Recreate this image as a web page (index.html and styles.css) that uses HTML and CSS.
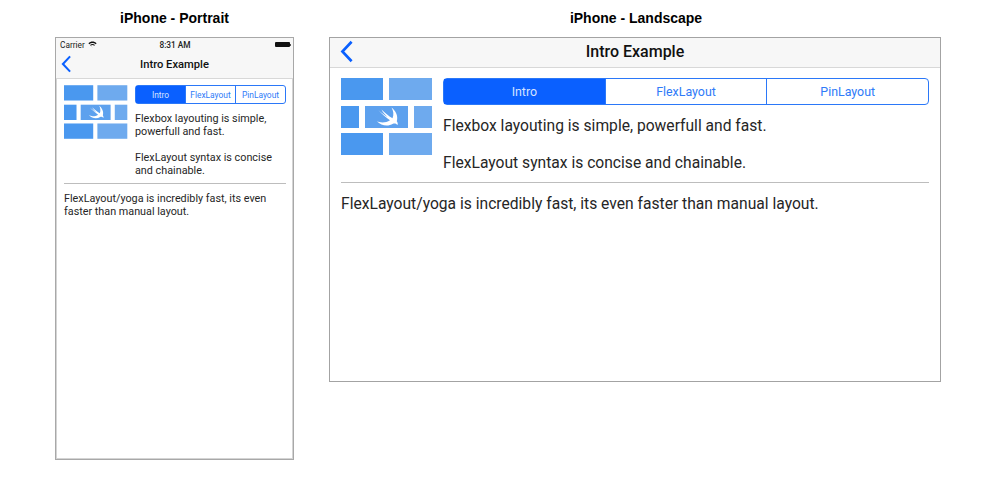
FILE: index.html
```html
<!DOCTYPE html>
<html lang="en">
<head>
<meta charset="utf-8">
<title>iPhone layouts</title>
<link rel="stylesheet" href="styles.css">
</head>
<body>
<svg class="defs" width="0" height="0" aria-hidden="true">
  <symbol id="logo" viewBox="0 0 92 77">
    <rect x="0" y="0" width="42" height="22" fill="#4a98ef"/>
    <rect x="48" y="0" width="43" height="22" fill="#6eaaee"/>
    <rect x="0" y="28" width="18" height="22" fill="#4a98ef"/>
    <rect x="24" y="28" width="43" height="22" fill="#5da1ee"/>
    <rect x="73" y="28" width="18" height="22" fill="#6eaaee"/>
    <rect x="0" y="55" width="42" height="22" fill="#4a98ef"/>
    <rect x="48" y="55" width="43" height="22" fill="#6eaaee"/>
    <path d="M50.500 29.500C54.500 32.500 57.500 38 55.800 43.200C56.800 44.500 57 46 56.500 47C55.500 45.500 53.500 45 52 45.800C47 48.800 40.500 48 35.700 43.300C39.500 45 45 45 49 42.300C45 39.500 40.500 35.800 37.300 32C40.500 35 44 37.500 46.500 39C44 36.800 42 34.500 40.500 31.500C44 35 47.500 38 51.500 40.300C53 36.500 52.500 33 50.500 29.500Z" fill="#fff"/>
  </symbol>
</svg>
<main class="stage">
  <section class="device device-portrait">
    <h2 class="device-title">iPhone - Portrait</h2>
    <div class="screen">
      <header class="bar">
        <div class="status">
          <span class="status-left">Carrier
            <svg class="wifi" viewBox="0 0 10 8"><path d="M5 7.500 0.300 2.600C3 0 7 0 9.700 2.600L8.700 3.600C6.500 1.700 3.500 1.700 1.300 3.600L2.200 4.500C3.800 3.200 6.200 3.200 7.800 4.500L7 5.300C5.800 4.500 4.200 4.500 3 5.300Z" fill="#111"/></svg>
          </span>
          <span class="status-time">8:31 AM</span>
          <span class="battery"></span>
        </div>
        <div class="nav">
          <svg class="back" viewBox="0 0 12 20"><path d="M10 1.500 2 10l8 8.500" fill="none" stroke="#0a60ff" stroke-width="2.300"/></svg>
          <span class="nav-title">Intro Example</span>
        </div>
      </header>
      <div class="content">
        <div class="intro">
          <svg class="logo"><use href="#logo"/></svg>
          <div class="intro-main">
            <div class="segments">
              <span class="segment segment-on">Intro</span>
              <span class="segment">FlexLayout</span>
              <span class="segment">PinLayout</span>
            </div>
            <p class="copy copy-first">Flexbox layouting is simple, powerfull and fast.</p>
            <p class="copy copy-second">FlexLayout syntax is concise and chainable.</p>
          </div>
        </div>
        <hr class="rule">
        <p class="copy copy-last">FlexLayout/yoga is incredibly fast, its even faster than manual layout.</p>
      </div>
    </div>
  </section>
  <section class="device device-landscape">
    <h2 class="device-title">iPhone - Landscape</h2>
    <div class="screen">
      <header class="bar">
        <div class="nav">
          <svg class="back" viewBox="0 0 12 20"><path d="M10 1.500 2 10l8 8.500" fill="none" stroke="#0a60ff" stroke-width="2.300"/></svg>
          <span class="nav-title">Intro Example</span>
        </div>
      </header>
      <div class="content">
        <div class="intro">
          <svg class="logo"><use href="#logo"/></svg>
          <div class="intro-main">
            <div class="segments">
              <span class="segment segment-on">Intro</span>
              <span class="segment">FlexLayout</span>
              <span class="segment">PinLayout</span>
            </div>
            <p class="copy copy-first">Flexbox layouting is simple, powerfull and fast.</p>
            <p class="copy copy-second">FlexLayout syntax is concise and chainable.</p>
          </div>
        </div>
        <hr class="rule">
        <p class="copy copy-last">FlexLayout/yoga is incredibly fast, its even faster than manual layout.</p>
      </div>
    </div>
  </section>
</main>
</body>
</html>
```
FILE: styles.css
```css
* { box-sizing: border-box; }
html, body { margin: 0; background: #fff; }
body { width: 984px; height: 480px; overflow: hidden; font-family: Roboto, "Liberation Sans", sans-serif; color: #1c1c1c; }
.defs { position: absolute; }
.stage { display: flex; align-items: flex-start; gap: 35px; padding: 11px 0 0 55px; }
.device { display: flex; flex-direction: column; }
.device-portrait { width: 239px; }
.device-landscape { width: 612px; }
.device-title { margin: 0 0 11px; height: 15px; line-height: 15px; font-size: 14px; font-weight: 700; text-align: center; color: #000; font-family: "Liberation Sans", sans-serif; }
.device-landscape .device-title { padding-left: 2px; }
.screen { border: 1px solid #a3a3a3; background: #fff; display: flex; flex-direction: column; }
.device-portrait .screen { height: 423px; border-color: #a8a8a8; box-shadow: inset 1px 0 #d4d4d4, inset -1px 0 #d4d4d4, inset 0 -1px #d4d4d4; }
.device-landscape .screen { height: 345px; }
.bar { background: #f7f7f7; border-bottom: 1px solid #d8d8d8; }
.status { height: 13px; display: flex; align-items: center; justify-content: space-between; position: relative; padding: 0 3px 0 4px; font-size: 8.300px; color: #222; }
.status-left { display: flex; align-items: center; gap: 3px; }
.wifi { width: 9px; height: 7px; }
.status-time { position: absolute; left: 1px; right: 0; text-align: center; font-size: 8.300px; font-weight: 500; }
.battery { width: 15px; height: 5px; border-radius: 1px; background: #111; position: relative; }
.battery::after { content: ""; position: absolute; right: -1px; top: 1.500px; width: 1px; height: 2px; background: #555; }
.nav { position: relative; display: flex; align-items: center; justify-content: center; }
.device-portrait .nav { height: 27px; }
.device-landscape .nav { height: 29px; padding-bottom: 2px; }
.back { position: absolute; }
.device-portrait .back { left: 5px; top: 4px; width: 11px; height: 18px; }
.device-landscape .back { left: 10px; top: 2px; width: 14px; height: 23px; }
.nav-title { font-weight: 500; color: #111; }
.device-portrait .nav-title { font-size: 11.200px; }
.device-landscape .nav-title { font-size: 16px; }
.content { display: flex; flex-direction: column; }
.device-portrait .content { padding: 6px 7px 0 8px; }
.device-landscape .content { padding: 10px 11px 0 11px; }
.intro { display: flex; }
.logo { flex: none; }
.device-portrait .logo { width: 64px; height: 54px; margin-right: 7px; }
.device-landscape .logo { width: 92px; height: 77px; margin-right: 10px; }
.intro-main { flex: 1; min-width: 0; }
.segments { display: flex; border: 1px solid #2b78f8; color: #2f7bf8; }
.device-portrait .segments { height: 19px; border-radius: 3px; font-size: 8.400px; }
.device-landscape .segments { height: 27px; border-radius: 4px; font-size: 12.400px; }
.segment { flex: 1 1 0; display: flex; align-items: center; justify-content: center; border-left: 1px solid #2b78f8; }
.segment:first-child { border-left: 0; }
.segment-on { background: #0a60ff; color: #d5e3ff; }
.copy { margin: 0; color: #262626; }
.device-portrait .copy { font-size: 10.800px; line-height: 13px; }
.device-landscape .copy { font-size: 15.640px; line-height: 20px; }
.device-portrait .copy-first { margin-top: 8px; }
.device-portrait .copy-second { margin-top: 13px; }
.device-landscape .copy-first { margin-top: 11px; }
.device-landscape .copy-second { margin-top: 17px; }
.rule { width: 100%; margin: 0; border: 0; height: 1px; background: #bdbdbd; }
.device-portrait .rule { margin-top: 6px; }
.device-landscape .rule { margin-top: 9px; }
.device-portrait .copy-last { margin-top: 8px; }
.device-landscape .copy-last { margin-top: 11px; }
```
